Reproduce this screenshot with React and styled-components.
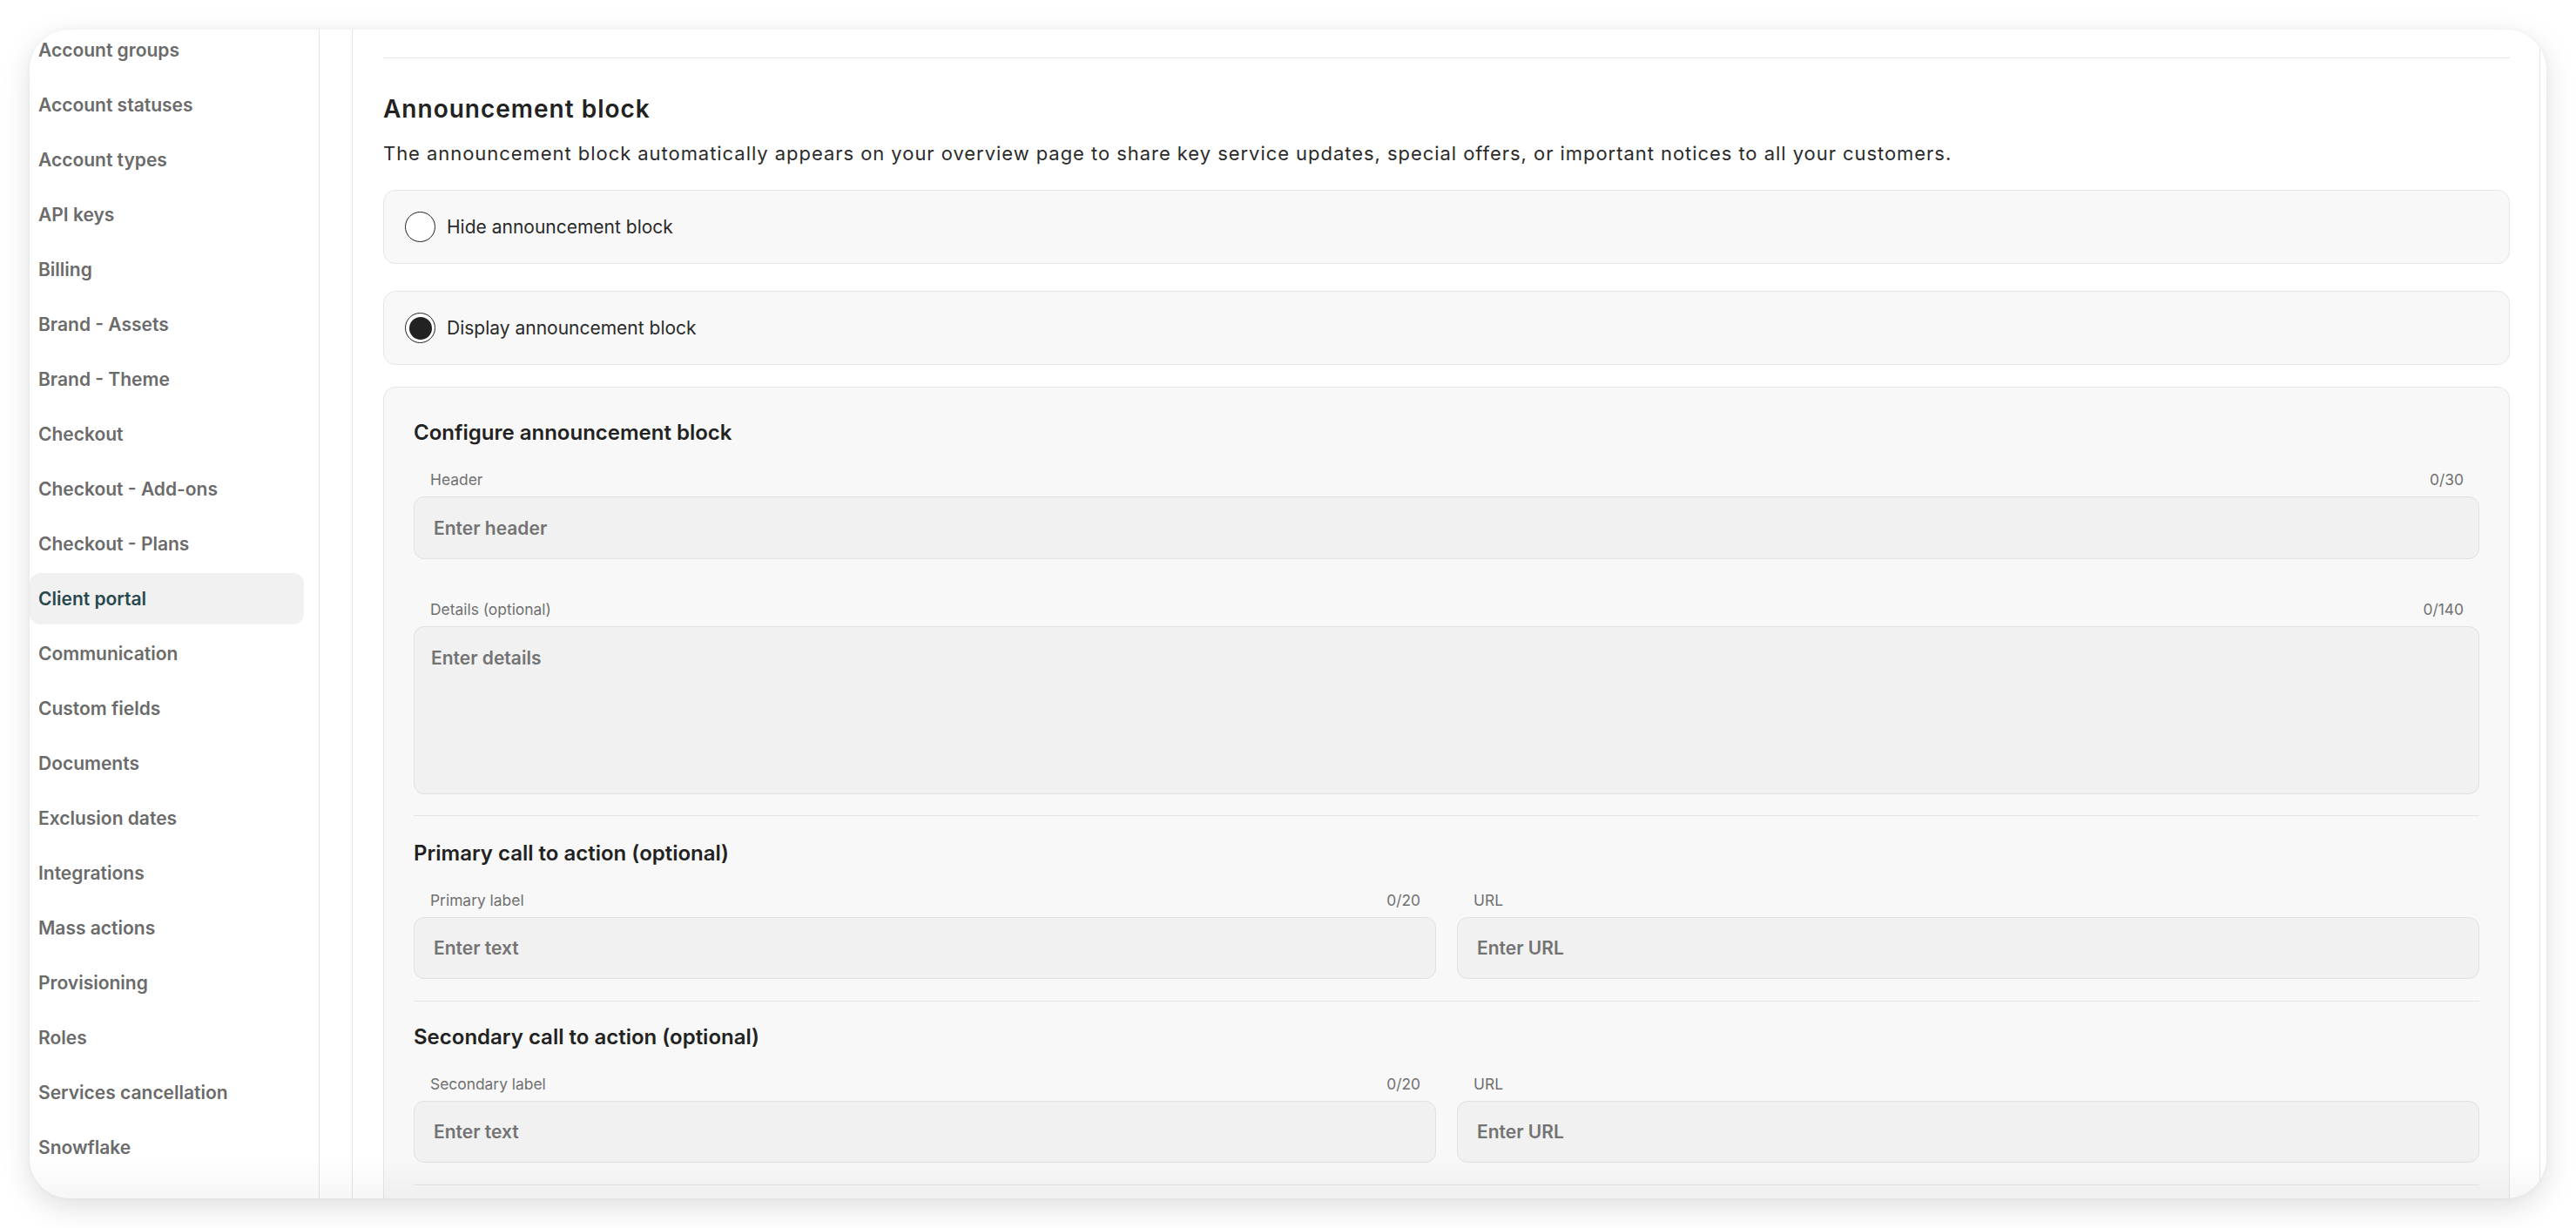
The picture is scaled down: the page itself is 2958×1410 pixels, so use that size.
import styled, { createGlobalStyle } from 'styled-components';

const GlobalStyle = createGlobalStyle`
	html, body {
		margin: 0;
		padding: 0;
		background: #ffffff;
		font-family: Inter, "Noto Sans", "Liberation Sans", sans-serif;
		-webkit-font-smoothing: antialiased;
	}

	* {
		box-sizing: border-box;
	}
`;

const NAV_ITEMS = [
	'Account groups',
	'Account statuses',
	'Account types',
	'API keys',
	'Billing',
	'Brand - Assets',
	'Brand - Theme',
	'Checkout',
	'Checkout - Add-ons',
	'Checkout - Plans',
	'Client portal',
	'Communication',
	'Custom fields',
	'Documents',
	'Exclusion dates',
	'Integrations',
	'Mass actions',
	'Provisioning',
	'Roles',
	'Services cancellation',
	'Snowflake',
];

const ACTIVE_ITEM = 'Client portal';

const Page = styled.div`
	height: 1410px;
	padding: 34px;
`;

const Card = styled.div`
	position: relative;
	display: flex;
	height: 100%;
	padding-right: 7px;
	background: #ffffff;
	border-radius: 46px;
	overflow: hidden;
	box-shadow:
		0 10px 34px rgba(0, 0, 0, 0.13),
		0 0 6px rgba(0, 0, 0, 0.04);

	&::after {
		content: '';
		position: absolute;
		left: 0;
		right: 0;
		bottom: 0;
		height: 48px;
		background: linear-gradient(rgba(0, 0, 0, 0), rgba(0, 0, 0, 0.035));
		pointer-events: none;
	}
`;

const Sidebar = styled.nav`
	flex: 0 0 333px;
	padding-right: 17px;
	border-right: 1px solid #e4e4e4;
	overflow: hidden;
`;

const NavList = styled.ul`
	list-style: none;
	margin: -6px 0 0;
	padding: 0;
	display: flex;
	flex-direction: column;
	gap: 4px;
`;

const NavItem = styled.li`
	display: flex;
	align-items: center;
	height: 59px;
	padding-left: 10px;
	border-radius: 12px;
	font-size: 21px;
	font-weight: 600;
	color: ${({ $active }) => ($active ? '#284850' : '#6b6b6b')};
	background: ${({ $active }) => ($active ? '#f1f1f1' : 'transparent')};
`;

const Main = styled.main`
	flex: 1;
	display: flex;
	padding-left: 37px;
	min-width: 0;
`;

const Panel = styled.div`
	flex: 1;
	padding: 32px 34px 0 35px;
	border-left: 1px solid #e4e4e4;
	border-right: 1px solid #e4e4e4;
	overflow: hidden;
`;

const Divider = styled.hr`
	margin: ${({ $spacing }) => $spacing || '0'};
	border: none;
	border-top: 1px solid #e6e6e6;
`;

const Title = styled.h2`
	margin: 40px 0 0;
	font-size: 28px;
	line-height: 36px;
	font-weight: 600;
	letter-spacing: 1px;
	color: #222222;
`;

const Description = styled.p`
	margin: 18px 0 0;
	font-size: 22px;
	line-height: 30px;
	font-weight: 400;
	letter-spacing: 0.95px;
	color: #2b2b2b;
`;

const OptionList = styled.div`
	display: flex;
	flex-direction: column;
	gap: 31px;
	margin-top: 27px;
`;

const Option = styled.label`
	display: flex;
	align-items: center;
	gap: 13px;
	height: 85px;
	padding-left: 24px;
	background: #f8f8f8;
	border: 1px solid #e6e6e6;
	border-radius: 14px;
	font-size: 21px;
	color: #2a2a2a;
`;

const Radio = styled.span`
	position: relative;
	width: 35px;
	height: 35px;
	border-radius: 50%;
	border: 1.5px solid #222222;
	background: #ffffff;

	&::after {
		content: '';
		display: ${({ $checked }) => ($checked ? 'block' : 'none')};
		position: absolute;
		inset: 3.5px;
		border-radius: 50%;
		background: #222222;
	}
`;

const ConfigBox = styled.section`
	margin-top: 25px;
	padding: 36px 34px 40px;
	background: #f8f8f8;
	border: 1px solid #e6e6e6;
	border-radius: 14px;
`;

const SectionTitle = styled.h3`
	margin: 0 0 27px;
	font-size: 24px;
	line-height: 32px;
	font-weight: 600;
	color: #222222;
`;

const FieldRow = styled.div`
	display: grid;
	grid-template-columns: ${({ $cols }) => $cols || '1fr'};
	gap: 24px;
	margin-bottom: ${({ $gap }) => $gap || '0'};
`;

const Field = styled.div`
	display: flex;
	flex-direction: column;
`;

const LabelRow = styled.div`
	display: flex;
	justify-content: space-between;
	height: 22px;
	margin-bottom: 8px;
	padding: 0 18px 0 19px;
	font-size: 17.4px;
	line-height: 22px;
	color: #707070;
`;

const inputStyles = `
	width: 100%;
	background: #f1f1f1;
	border: 1px solid #e1e1e1;
	border-radius: 12px;
	font-family: Inter, "Noto Sans", "Liberation Sans", sans-serif;
	font-size: 21px;
	font-weight: 600;
	color: #222222;
	outline: none;

	&::placeholder {
		color: #737373;
		opacity: 1;
	}
`;

const TextInput = styled.input`
	${inputStyles}
	height: ${({ $height }) => $height || '71px'};
	padding: 0 22px;
`;

const TextArea = styled.textarea`
	${inputStyles}
	height: 193px;
	padding: 23px 19px;
	line-height: 26px;
	resize: none;
`;

const FormField = ({ label, counter, placeholder, multiline, height }) => (
	<Field>
		<LabelRow>
			<span>{label}</span>
			{counter && <span>{counter}</span>}
		</LabelRow>
		{multiline ? (
			<TextArea placeholder={placeholder} />
		) : (
			<TextInput placeholder={placeholder} $height={height} />
		)}
	</Field>
);

const CallToAction = ({ title, label }) => (
	<>
		<SectionTitle>{title}</SectionTitle>
		<FieldRow $cols="1fr 1fr">
			<FormField label={label} counter="0/20" placeholder="Enter text" />
			<FormField label="URL" placeholder="Enter URL" />
		</FieldRow>
		<Divider $spacing="25px 0 25px" />
	</>
);

const App = () => (
	<>
		<GlobalStyle />
		<Page>
			<Card>
				<Sidebar>
					<NavList>
						{NAV_ITEMS.map((item) => (
							<NavItem key={item} $active={item === ACTIVE_ITEM}>
								{item}
							</NavItem>
						))}
					</NavList>
				</Sidebar>
				<Main>
					<Panel>
						<Divider />
						<Title>Announcement block</Title>
						<Description>
							The announcement block automatically appears on your overview page to share key service
							updates, special offers, or important notices to all your customers.
						</Description>
						<OptionList>
							<Option>
								<Radio />
								Hide announcement block
							</Option>
							<Option>
								<Radio $checked />
								Display announcement block
							</Option>
						</OptionList>
						<ConfigBox>
							<SectionTitle>Configure announcement block</SectionTitle>
							<FieldRow $gap="47px">
								<FormField label="Header" counter="0/30" placeholder="Enter header" height="72px" />
							</FieldRow>
							<FieldRow>
								<FormField
									label="Details (optional)"
									counter="0/140"
									placeholder="Enter details"
									multiline
								/>
							</FieldRow>
							<Divider $spacing="24px 0 27px" />
							<CallToAction title="Primary call to action (optional)" label="Primary label" />
							<CallToAction title="Secondary call to action (optional)" label="Secondary label" />
						</ConfigBox>
					</Panel>
				</Main>
			</Card>
		</Page>
	</>
);

export default App;
